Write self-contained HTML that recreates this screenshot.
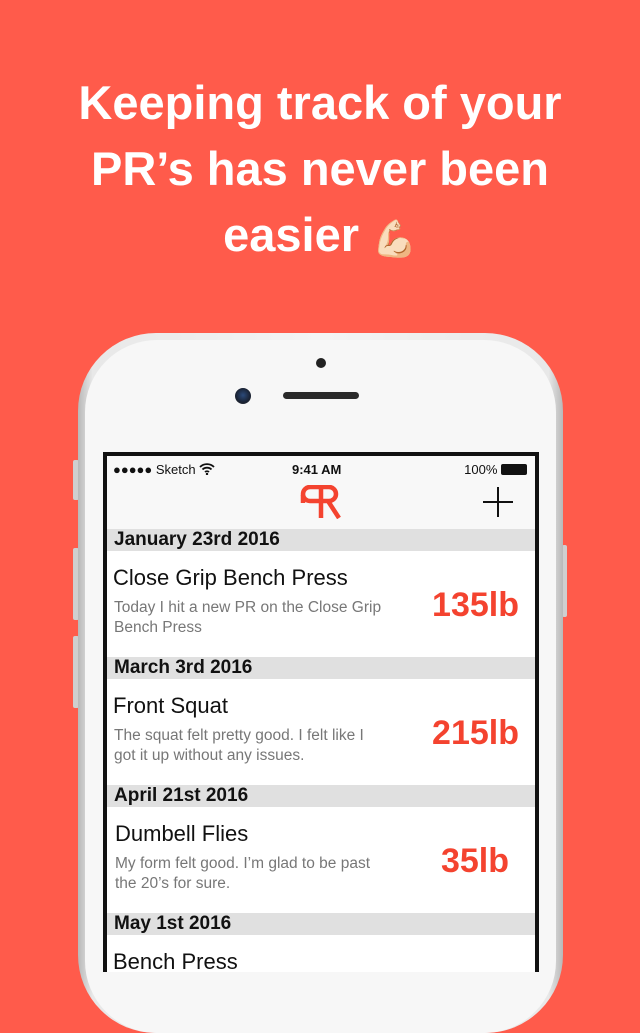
<!DOCTYPE html><html><head><meta charset="utf-8"><style>
*{margin:0;padding:0;box-sizing:border-box}
body{width:640px;height:960px;overflow:hidden;background:#FF5B4B;font-family:"Liberation Sans",Arial,sans-serif;position:relative}
.title{position:absolute;top:70px;left:0;width:640px;text-align:center;color:#fff;font-weight:bold;font-size:47px;line-height:66px;letter-spacing:0}
.phone{position:absolute;left:78px;top:333px;width:485px;height:700px;border-radius:78px;background:linear-gradient(90deg,#b8b8b8,#e8e8e8 3%,#f4f4f4 50%,#e8e8e8 97%,#b8b8b8);}
.phone .in{position:absolute;left:7px;top:7px;right:7px;bottom:0;border-radius:72px;background:#f7f7f7}
.btn{position:absolute;left:73px;width:6px;background:#cfcfcf;border-radius:2px}
.rbtn{position:absolute;left:562px;width:5px;background:#cfcfcf;border-radius:2px}
.cam{position:absolute;left:235px;top:388px;width:16px;height:16px;border-radius:50%;background:radial-gradient(circle at 50% 45%,#2b4a7a,#1a2233 60%,#333)}
.dot{position:absolute;left:316px;top:358px;width:10px;height:10px;border-radius:50%;background:#222}
.spk{position:absolute;left:283px;top:392px;width:76px;height:7px;border-radius:4px;background:#2a2a2a}
.screen{position:absolute;left:103px;top:452px;width:436px;height:520px;background:#111;}
.sc{position:absolute;left:4px;top:4px;right:4px;bottom:0;background:#f8f8f8;overflow:hidden}
.status{height:25px;font-size:13px;color:#111;position:relative}
.nav{height:48px;position:relative}
.hdr{height:22px;background:#e0e0e0;font-size:19px;font-weight:bold;color:#111;padding-left:7px;line-height:22px}
.row{height:106px;background:#fff;position:relative}
.row .t{position:absolute;left:6px;top:14px;font-size:22px;color:#111}
.row .d{position:absolute;left:7px;top:47px;font-size:15.5px;color:#777;line-height:20px;width:275px}
.row .n{position:absolute;right:16px;top:35px;font-size:34px;font-weight:bold;color:#F4432F}
</style></head><body>
<div class="title">Keeping track of your<br>PR’s has never been<br>easier <span style="font-size:36px">💪🏻</span></div>
<div class="btn" style="top:460px;height:40px"></div>
<div class="btn" style="top:548px;height:72px"></div>
<div class="btn" style="top:636px;height:72px"></div>
<div class="rbtn" style="top:545px;height:72px"></div>
<div class="phone"><div class="in"></div></div>
<div class="dot"></div><div class="cam"></div><div class="spk"></div>
<div class="screen" style="height:520px"><div class="sc">
<div class="status">
<span style="position:absolute;left:6px;top:6px">●●●●● Sketch <svg width="16" height="12" viewBox="0 0 16 12" style="vertical-align:-1px"><path d="M1 4a10 10 0 0 1 14 0M3.5 6.5a6.5 6.5 0 0 1 9 0M6 9a3 3 0 0 1 4 0" stroke="#111" stroke-width="1.8" fill="none"/><circle cx="8" cy="11" r="1.2" fill="#111"/></svg></span>
<span style="position:absolute;left:185px;top:6px;font-weight:bold">9:41 AM</span>
<span style="position:absolute;right:8px;top:6px">100% <span style="display:inline-block;width:26px;height:11px;background:#111;border-radius:2px;vertical-align:-1px"></span></span>
</div>
<div class="nav">
<svg style="position:absolute;left:192px;top:4px" width="46" height="34" viewBox="0 0 46 34"><path d="M22 2H11a7 7 0 0 0 0 14h11" stroke="#F4432F" stroke-width="4.5" fill="none"/><path d="M4 10v8" stroke="#F4432F" stroke-width="4.5"/><path d="M22 0v33M22 2h8a7 7 0 0 1 0 14h-8M29 16l11 17" stroke="#F4432F" stroke-width="4.5" fill="none"/></svg>
<svg style="position:absolute;left:376px;top:6px" width="30" height="30"><path d="M15 0v30M0 15h30" stroke="#111" stroke-width="2"/></svg>
</div>
<div class="hdr">January 23rd 2016</div>
<div class="row"><div class="t">Close Grip Bench Press</div><div class="d">Today I hit a new PR on the Close Grip Bench Press</div><div class="n">135lb</div></div>
<div class="hdr">March 3rd 2016</div>
<div class="row"><div class="t">Front Squat</div><div class="d" style="width:265px">The squat felt pretty good. I felt like I got it up without any issues.</div><div class="n">215lb</div></div>
<div class="hdr">April 21st 2016</div>
<div class="row"><div class="t" style="left:8px">Dumbell Flies</div><div class="d" style="left:8px;width:270px">My form felt good. I’m glad to be past the 20’s for sure.</div><div class="n" style="right:26px">35lb</div></div>
<div class="hdr">May 1st 2016</div>
<div class="row"><div class="t">Bench Press</div></div>
</div></div>
</body></html>
